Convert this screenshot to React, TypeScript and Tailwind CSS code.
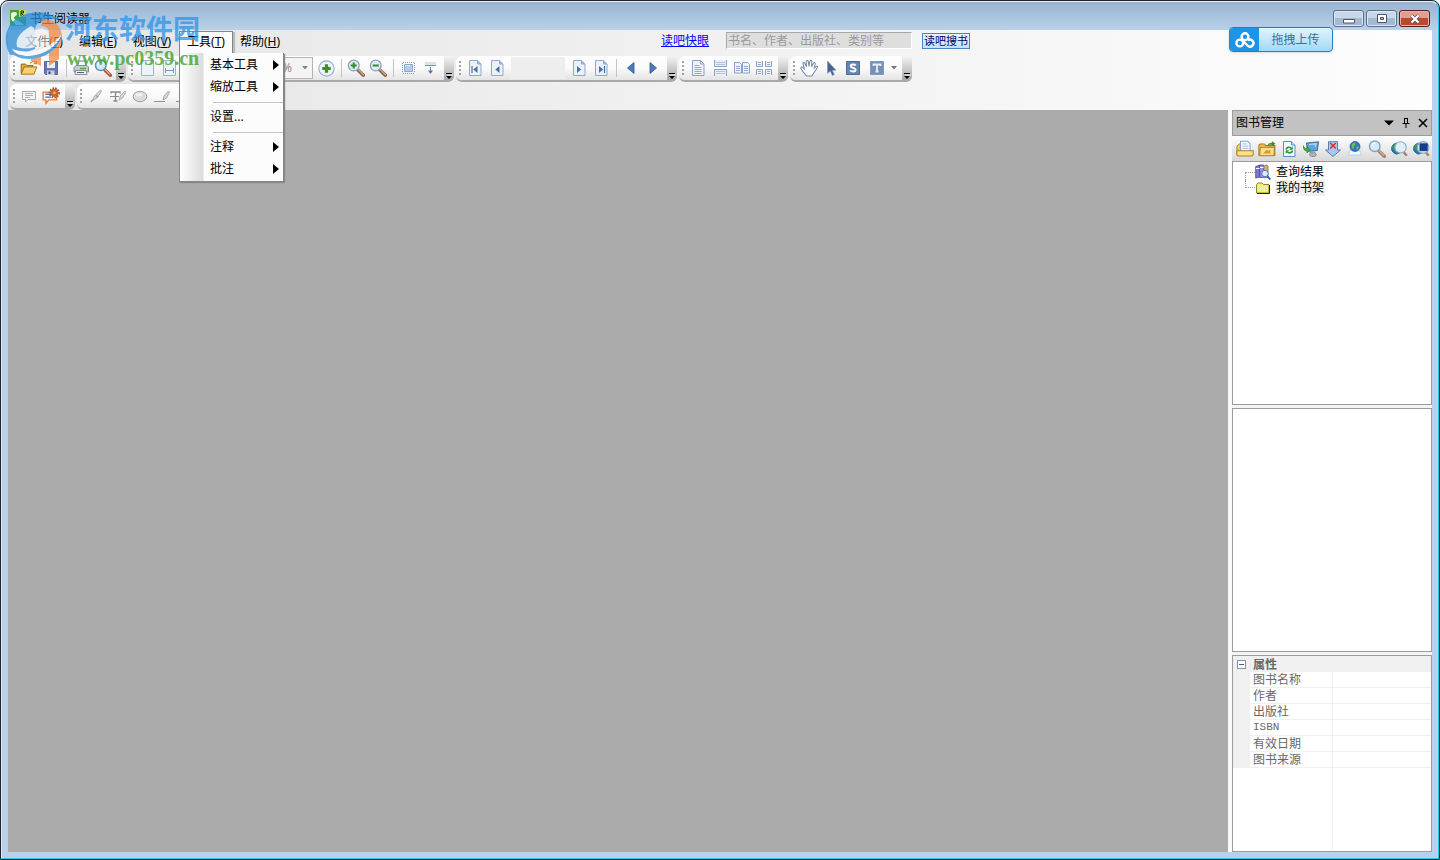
import React from 'react';

type Kids = { children?: React.ReactNode };

function Svg({ children, size = 'h-4 w-4' }: Kids & { size?: string }) {
  return (
    <svg viewBox="0 0 16 16" className={size + ' shrink-0'} fill="none" aria-hidden="true">
      {children}
    </svg>
  );
}

const steel = '#7d95b8';

/* ---------- toolbar icons ---------- */
const FolderOpen = () => (
  <Svg size="h-[18px] w-[18px]">
    <path d="M1 13V4.500h4l1 1.200h5.500V7" fill="#e0a93c" stroke="#8a6420" strokeWidth=".8" />
    <path d="M1 13.500 3.800 7H15l-2.600 6.500z" fill="#f7cf6b" stroke="#9b6d1c" strokeWidth=".8" />
    <path d="M9 4c1-2 3.500-2.400 5-.8M14.600 1.500v2.700h-2.600" stroke="#c79531" strokeWidth="1.100" />
  </Svg>
);
const Save = () => (
  <Svg>
    <path d="M1.500 1.500h13v13h-12l-1-1z" fill="#6675aa" stroke="#5a689c" />
    <path d="M4 2h8v6H4z" fill="#e9edf7" />
    <path d="M4 10.500h7.500V15H4z" fill="#c9cfe0" />
    <path d="M5.500 11.500h2V14h-2z" fill="#39457a" />
  </Svg>
);
const Printer = () => (
  <Svg>
    <path d="M4.500 6 6 1h7.500L12 6" fill="#f4f8fd" stroke="#6f7f95" />
    <path d="M1 7.500 3 5.500h11L15.500 7v5H1z" fill="#c5cad1" stroke="#707984" strokeWidth=".8" />
    <path d="M2.500 10.500h10.500l1 4H2z" fill="#eceff2" stroke="#707984" strokeWidth=".8" />
    <path d="M7 8.500h6" stroke="#58a84a" strokeWidth="1.300" />
    <path d="M4 12.500h7" stroke="#555e68" />
  </Svg>
);
function Lens({ mark }: { mark?: 'plus' | 'minus' }) {
  return (
    <Svg size="h-[18px] w-[18px]">
      <path d="m9.500 9.500 5 5" stroke="#8d624a" strokeWidth="3" strokeLinecap="round" />
      <path d="m9.800 9.200 4.800 4.800" stroke="#d0a48c" strokeWidth="1.200" strokeLinecap="round" />
      <circle cx="6" cy="5.800" r="4.800" fill="#dcecf8" stroke="#8a9db5" strokeWidth="1.100" />
      {mark && <path d="M3.300 5.800h5.400" stroke="#3c8a2c" strokeWidth="1.900" />}
      {mark === 'plus' && <path d="M6 3.100v5.400" stroke="#3c8a2c" strokeWidth="1.900" />}
    </Svg>
  );
}
function Search({ pale = false }: { pale?: boolean }) {
  return (
    <Svg size="h-[18px] w-[18px]">
      <path d="m9.500 9.500 5 5" stroke={pale ? '#a9826c' : '#b0573b'} strokeWidth="3" strokeLinecap="round" />
      <path d="m9.800 9.300 4.400 4.400" stroke="#e5b09a" strokeWidth="1" />
      <circle cx="6" cy="5.500" r="4.700" fill="#d2eafb" stroke={pale ? '#86a5c6' : '#5f8fc2'} strokeWidth="1.300" />
      <path d="M3.500 5c.3-1.500 1.500-2.200 2.800-2.200" stroke="#fff" strokeWidth="1.200" />
    </Svg>
  );
}
const PageBlank = () => (
  <Svg>
    <path d="M2.500.5h12v15h-12z" fill="#edf3fb" stroke="#9fb2cf" />
  </Svg>
);
const PageWidth = () => (
  <Svg>
    <path d="M2.500.5h12v15h-12z" fill="#edf3fb" stroke="#9fb2cf" />
    <path d="M4.500 8v5M12.500 8v5M5 10.500h7" stroke={steel} />
  </Svg>
);
const PlusCircle = () => (
  <Svg size="h-[17px] w-[17px]">
    <circle cx="8" cy="8" r="7.200" fill="#edf3fa" stroke="#94acd0" />
    <path d="M8 4v8M4 8h8" stroke="#3f8c2a" strokeWidth="3" />
  </Svg>
);
const FitScreen = () => (
  <Svg>
    <path d="M2.500 3v10M14.500 3v10M3 2.500h11M3 13.500h11" stroke={steel} strokeDasharray="1 1" />
    <path d="M4.500 4.500h8v7h-8z" fill="#b9cae5" stroke="#90a6c9" />
    <path d="M5 5.500h5" stroke="#dfe8f5" />
  </Svg>
);
const ScrollDown = () => (
  <Svg>
    <path d="M3 2h11v3H3z" fill="#d8e2f1" />
    <path d="M3 5.500h11" stroke={steel} />
    <path d="M8.500 7v4" stroke="#6b85ad" />
    <path d="M6 10.500h5L8.500 14z" fill="#5b76a4" />
  </Svg>
);
function PageNav({ kind }: { kind: 'first' | 'prev' | 'next' | 'last' }) {
  const left = kind === 'first' || kind === 'prev';
  return (
    <Svg>
      <path d="M2.500.5h8l3.500 3.500v11.500H2.500z" fill="#eaf1fa" stroke="#91a7c8" />
      <path d="M10.500.5V4H14" fill="#aabdd8" stroke="#91a7c8" />
      <path d={left ? 'M10.500 6v7L6.300 9.500z' : 'M6 6v7l4.200-3.500z'} fill="#4770a6" />
      {kind === 'first' && <path d="M5 6v7" stroke="#4770a6" strokeWidth="1.200" />}
      {kind === 'last' && <path d="M11.500 6v7" stroke="#4770a6" strokeWidth="1.200" />}
    </Svg>
  );
}
const TriLeft = () => (
  <Svg>
    <path d="M11 2.500v11L4.500 8z" fill="#4d7bb8" stroke="#2d5592" strokeWidth=".8" />
  </Svg>
);
const TriRight = () => (
  <Svg>
    <path d="M5 2.500v11L11.500 8z" fill="#4d7bb8" stroke="#2d5592" strokeWidth=".8" />
  </Svg>
);
const SinglePage = () => (
  <Svg>
    <path d="M2.500.5h8l3.500 3.500v11.500H2.500z" fill="#edf3fb" stroke="#8ba1c2" />
    <path d="M10.500.5V4H14" stroke="#8ba1c2" />
    <path d="M4.500 5.500h5M4.500 7.500h7M4.500 9.500h7M4.500 11.500h7M4.500 13.500h7" stroke="#93a9c9" />
  </Svg>
);
const Continuous = () => (
  <Svg>
    <path d="M2.500 0v6.500h12V0M2.500 16V9.500h12V16" fill="#e6eef9" stroke="#8ba1c2" />
    <path d="M4 2.500h9M4 4.500h9M4 11.500h9M4 13.500h9" stroke="#b3c3db" />
  </Svg>
);
const Facing = () => (
  <Svg>
    <path d="M.5 2.500h5L7.500 4.500v8.500h-7zM8.500 2.500h5l2 2v8.500h-7z" fill="#edf3fb" stroke="#8ba1c2" />
    <path d="M2 6.500h4M2 8.500h4M2 10.500h4M10 6.500h4M10 8.500h4M10 10.500h4" stroke="#93a9c9" />
  </Svg>
);
const ContinuousFacing = () => (
  <Svg>
    <path d="M.5 1v5.500h6V1M9.500 1v5.500h6V1M.5 15V9.500h6V15M9.500 15V9.500h6V15" fill="#edf3fb" stroke="#8ba1c2" />
    <path d="M2 2.500h3M2 4.500h3M11 2.500h3M11 4.500h3M2 11.500h3M2 13.500h3M11 11.500h3M11 13.500h3" stroke="#93a9c9" />
  </Svg>
);
const Hand = () => (
  <Svg size="h-[18px] w-[18px]">
    <path
      d="M6 15.200 2.500 11 .8 8.300c-.3-1 .9-1.500 1.600-.8L4 9 2.600 4.200c-.2-1.100 1.100-1.500 1.600-.5L5.800 7 5.500 2.200c0-1.200 1.600-1.300 1.800-.1L8 6.500l.8-4.600c.3-1.100 1.800-.9 1.700.3L10.300 7l1.700-3.300c.5-1 1.800-.5 1.500.6l-.9 3.700 1.500-1.300c.8-.6 1.700.1 1.200 1L12.500 12l-2 3.200z"
      fill="#fff"
      stroke="#7388aa"
      strokeWidth=".9"
    />
  </Svg>
);
const Arrow = () => (
  <Svg>
    <path d="M4.500 1v12.500l2.800-2.600 2 4.600 2-1-2-4.300h3.700z" fill="#48648e" stroke="#7d95b8" strokeWidth=".6" />
  </Svg>
);
const SnapS = () => (
  <Svg>
    <path d="M1.500 1.500h13v13h-13z" fill="#6785b2" stroke="#4f6c99" />
    <path d="M10.700 5.500C9.500 4 5.600 4 5.700 6.200c.1 2 4.900 1.200 4.900 3.500 0 2.300-4 2.200-5.400.6" stroke="#fff" strokeWidth="1.900" />
  </Svg>
);
const TextT = () => (
  <Svg>
    <path d="M1.500 1.500h13v13h-13z" fill="#7690ba" stroke="#8299bf" />
    <path d="M4.500 6V4.500h7V6M8 5v6.500M6.500 11.500h3" stroke="#e8eef7" strokeWidth="1.800" />
  </Svg>
);
const NoteGray = () => (
  <Svg>
    <path d="M1.500 3.500h13v8H7L4.500 14v-2.500h-3z" fill="#f5f5f5" stroke="#a9a9a9" />
    <path d="M4 5.500h8M4 7.500h8M4 9.500h5" stroke="#b0b0b0" />
  </Svg>
);
const NoteOrange = () => (
  <Svg size="h-[18px] w-[18px]">
    <path d="M1 4.500h12v7H6L3.500 14.500v-3H1z" fill="#fff" stroke="#ef7a22" strokeWidth="1.200" />
    <path d="M3 6.500h5M3 9h5" stroke="#3b6cc0" strokeWidth="1.300" />
    <circle cx="11" cy="5.200" r="3.600" fill="#c4692e" />
    <circle cx="11" cy="5.200" r="4.200" stroke="#a4501c" strokeWidth="1.500" strokeDasharray="1.400 1.100" />
    <circle cx="11" cy="5.200" r="1.200" fill="#f6b57b" />
  </Svg>
);
const Marker = () => (
  <Svg>
    <path d="m12.500 2-6 6-1.500 4 4-2 4.500-7z" fill="#d8d8d8" stroke="#a2a2a2" strokeWidth=".9" />
    <path d="M5 11.500 3 14M8 7.500l2 1.500" stroke="#999" strokeWidth="1.300" />
  </Svg>
);
const TextMarker = () => (
  <Svg>
    <path d="M1 5.500V4h9v1.500M5.500 4v8.500M3.500 13h4" stroke="#8a8a8a" strokeWidth="1.400" />
    <path d="M0 8.500h9" stroke="#8a8a8a" />
    <path d="m15 3-4.500 4.500L9 12l3.500-2L16 4z" fill="#d8d8d8" stroke="#a2a2a2" strokeWidth=".8" />
  </Svg>
);
const Oval = () => (
  <Svg>
    <ellipse cx="8" cy="8.500" rx="6.800" ry="5.200" fill="#dcdcdc" stroke="#a0a0a0" />
    <ellipse cx="7" cy="6.800" rx="3.500" ry="1.800" fill="#f0f0f0" />
  </Svg>
);
const Underline = () => (
  <Svg>
    <path d="M0 13.500h11" stroke="#8f8f8f" />
    <path d="m14.500 3-4.500 5-1 4 3.500-2 3-6z" fill="#d8d8d8" stroke="#a2a2a2" strokeWidth=".9" />
  </Svg>
);

/* ---------- library panel icons ---------- */
const LibOpen = () => (
  <Svg size="h-[18px] w-[18px]">
    <path d="M.8 13.500V5.500L3 3.500h2v10z" fill="#efc75a" stroke="#a9802a" strokeWidth=".8" />
    <path d="M4 10V1.200h6.500l2 2V10" fill="#f4f9ff" stroke="#7fa3cf" strokeWidth=".9" />
    <path d="M5.800 3.500h3.700M5.800 5.500h5M5.800 7.500h5" stroke="#9bbbe0" strokeWidth=".8" />
    <path d="M.8 13V9.500h14.500V13l-1 1.300H1.800z" fill="#fae08a" stroke="#a9802a" strokeWidth=".9" />
  </Svg>
);
const LibFolder = () => (
  <Svg size="h-[18px] w-[18px]">
    <path d="M.8 13.500V4.500L2 3.500h3.500L7 5h8v8.500z" fill="#f0c24e" stroke="#a27824" strokeWidth=".9" />
    <path d="M1.500 14 2 6.500h12.500l-.3 7.500z" fill="#fbe08c" stroke="#a27824" strokeWidth=".8" />
    <path d="M8.500 5c.5-2 2.500-2.700 4-2.500V1l3 2.300-3 2.300V4.300C11 4.200 9.500 4.200 8.500 5z" fill="#3d8c2d" />
    <path d="m4.500 12 3.500-3.500 1.300 1.300L11 8.500V12z" fill="#d9973a" />
  </Svg>
);
const LibRefresh = () => (
  <Svg>
    <path d="M2.500.5h8L14 4v11.500H2.500z" fill="#f5f9ff" stroke="#5f8ac5" />
    <path d="M10.500.5V4H14" fill="#cfe0f5" stroke="#5f8ac5" />
    <path d="M5 8.500c.5-2.300 3.500-3 5-1.200M11.500 9.500c-.5 2.500-3.500 3.200-5.200 1.300" stroke="#2f9437" strokeWidth="1.600" />
    <path d="M11.800 5.300v3.500H8.300zM4.700 12.800V9.300h3.500z" fill="#2f9437" />
  </Svg>
);
const LibMonitor = () => (
  <Svg>
    <path d="M3.500 2 15.500.8 14.300 9.500l-9.500.8z" fill="#58a6e2" stroke="#42607f" strokeWidth=".9" />
    <path d="m6 3.500 7-.7-.6 3" stroke="#b9ddf7" strokeWidth="1.200" />
    <path d="M7.500 11h4l2 3-2 1.500h-3L6.500 14z" fill="#a9b2bd" stroke="#6f7984" strokeWidth=".7" />
    <path d="M0 4.500c1 2.500 2.500 3 4 3V5.500L7 8.800 4 12v-2C1.500 10 0 8 0 4.500z" fill="#4ca93b" stroke="#2b7423" strokeWidth=".6" />
  </Svg>
);
const LibDownX = () => (
  <Svg>
    <path d="M3.500.7h9V9h3L8 15.500.5 9h3z" fill="#a9c8ee" stroke="#4b75b5" strokeWidth=".9" />
    <path d="m5.200 2 5.600 5.500M10.800 2 5.200 7.500" stroke="#d9302b" strokeWidth="1.600" />
  </Svg>
);
const Globe = ({ x = 8, y = 5.5, r = 5 }: { x?: number; y?: number; r?: number }) => (
  <>
    <circle cx={x} cy={y} r={r} fill="#3478c8" stroke="#1f4d8e" strokeWidth=".7" />
    <path
      d={`M${x - 3.5} ${y - 1}c1-2.800 3-3 4-2.300l-.5 2-1.500 1.200.5 2-1.500.5zM${x + 1} ${y + 1}l2.500-1.500.3 2-1.500 2z`}
      fill="#6cc14c"
    />
  </>
);
const LibGlobe = () => (
  <Svg>
    <path d="M3 9.500h10l1.500 4.500h-13z" fill="#eef8ff" stroke="#a7d3ee" strokeWidth=".9" />
    <Globe />
  </Svg>
);
const LibGlobeSearch = () => (
  <Svg size="h-[17px] w-[17px]">
    <circle cx="5.500" cy="8" r="5" fill="#3f9a4a" stroke="#1f5d8e" strokeWidth=".7" />
    <path d="M1 8c1 3 3 4.500 5 5" stroke="#2d6cc0" strokeWidth="1.800" />
    <path d="m12 11.500 2.800 3.300" stroke="#a9826c" strokeWidth="2.400" />
    <circle cx="9" cy="7" r="5.300" fill="#dff0fb" stroke="#8ba8c4" />
  </Svg>
);
const LibGlobeSave = () => (
  <Svg size="h-[17px] w-[17px]">
    <circle cx="5.500" cy="8" r="5" fill="#3f9a4a" stroke="#1f5d8e" strokeWidth=".7" />
    <path d="M1 8c1 3 3 4.500 5 5" stroke="#2d6cc0" strokeWidth="1.800" />
    <path d="m12 11.500 2.800 3.300" stroke="#a9826c" strokeWidth="2.400" />
    <circle cx="9.500" cy="7" r="5.500" fill="#cfe4f5" stroke="#8ba8c4" />
    <path d="M6.500 3.500h7V10h-7z" fill="#123f93" stroke="#0b2b6a" strokeWidth=".6" />
  </Svg>
);
const Books = () => (
  <Svg>
    <path d="M.7 2.500 4.700 1v12l-4 1z" fill="#7b77cf" stroke="#474296" strokeWidth=".8" />
    <path d="M4.700 1h4v12.500h-4z" fill="#9a8fe0" stroke="#474296" strokeWidth=".8" />
    <path d="M8.800 2.500 11.500.8l1.500 1.500v11l-4 .5z" fill="#d4b073" stroke="#7d6238" strokeWidth=".8" />
    <path d="M1 4.500h3.500M5 3.500h3.500" stroke="#fff" />
    <path d="m12 12 3.500 3.500" stroke="#2e62b4" strokeWidth="1.800" />
    <circle cx="10" cy="9.500" r="3.200" fill="#d8eefc" stroke="#4c7fc0" />
  </Svg>
);
const YellowFolder = () => (
  <Svg>
    <path d="M1.500 13V4.500L3 3h4l1.500 1.500h5.500V13z" fill="#fff23a" stroke="#8f8a28" />
    <path d="M14.500 5v8.500H2" stroke="#222" />
    <path d="M3 6.500h10M3 8.500h10M3 10.500h10" stroke="#fffcb5" strokeDasharray="1 1" />
  </Svg>
);

/* ---------- building blocks ---------- */
function Tool({ label, children }: Kids & { label: string }) {
  return (
    <button type="button" aria-label={label} className="flex h-6 w-[22px] shrink-0 items-center justify-center">
      {children}
    </button>
  );
}
const Divider = () => (
  <span className="flex w-2 shrink-0 justify-center">
    <span className="h-[18px] w-px bg-[#c4c4c4]" />
  </span>
);
function Strip({ children }: Kids) {
  return (
    <div className="flex h-[26px] shrink-0 items-center rounded-md border-b-2 border-[#a9a9a9] bg-linear-to-b from-white via-[#fafafa] to-[#e4e4e4]">
      <span className="flex w-2 shrink-0 flex-col items-center gap-0.5">
        <i className="size-0.5 bg-[#a3a3a3]" />
        <i className="size-0.5 bg-[#a3a3a3]" />
        <i className="size-0.5 bg-[#a3a3a3]" />
        <i className="size-0.5 bg-[#a3a3a3]" />
      </span>
      {children}
      <button
        type="button"
        aria-label="工具栏选项"
        className="ml-auto flex h-6 w-2.5 shrink-0 items-end justify-center rounded-r bg-linear-to-b from-[#f4f4f4] to-[#a8a8a8]"
      >
        <svg viewBox="0 0 8 8" className="size-2" aria-hidden="true">
          <path d="M1 1h6v1H1zM1 4h6L4 7z" fill="#000" />
          <path d="M2 3h6" stroke="#fff" strokeWidth=".8" />
        </svg>
      </button>
    </div>
  );
}

const menus: [string, string][] = [
  ['文件', 'F'],
  ['编辑', 'E'],
  ['视图', 'V'],
  ['工具', 'T'],
  ['帮助', 'H'],
];

const toolMenu: { text: string; sub: boolean; rule?: boolean }[] = [
  { text: '基本工具', sub: true },
  { text: '缩放工具', sub: true },
  { text: '设置...', sub: false, rule: true },
  { text: '注释', sub: true, rule: true },
  { text: '批注', sub: true },
];

function ToolMenu() {
  return (
    <ul
      role="menu"
      className="absolute top-full left-0 z-20 w-[105px] border border-t-0 border-[#868686] bg-linear-to-r from-white from-0% via-[#dcdcdc] via-[23px] to-[#fcfcfc] to-[24px] py-px shadow-[1px_1px_1px_#888]"
    >
      {toolMenu.map((m) => (
        <li key={m.text} role="none">
          {m.rule && <div className="mt-1 mb-[3px] ml-[33px] h-px bg-[#c3c3c3]" role="separator" />}
          <button
            type="button"
            role="menuitem"
            className="flex h-[22px] w-full items-center justify-between pr-1 pl-[30px] text-left"
          >
            {m.text}
            {m.sub && (
              <svg viewBox="0 0 6 10" className="h-2.5 w-1.5" aria-hidden="true">
                <path d="M0 0v10l6-5z" fill="#000" />
              </svg>
            )}
          </button>
        </li>
      ))}
    </ul>
  );
}

function TitleBar() {
  const glass =
    'flex h-[17px] w-[31px] items-center justify-center rounded-[3px] border border-[#5b6f8a] bg-linear-to-b from-[#c9d8e8] from-50% to-[#a3bad2] to-50% shadow-[inset_0_0_0_1px_#dbe7f3]';
  return (
    <header className="flex h-7 shrink-0 items-start pt-2 pl-2">
      <svg viewBox="0 0 16 16" className="size-4" aria-hidden="true">
        <path d="M0 0h16v16H0z" fill="#3fa62b" />
        <path d="M9 0h7v7H9z" fill="#c6ea34" />
        <path d="M11 6V1h2.500v2H11l3 3" stroke="#0c2d08" fill="none" />
        <path d="M1 3c4-2 6-1 6 1s-3 2-3 4 4 2 10 7H6C4 12 1 11 1 8z" fill="#e9f9e4" />
      </svg>
      <h1 className="ml-1 text-xs leading-[18px]">书生阅读器</h1>
      <div className="mr-2 ml-auto flex gap-0.5">
        <button type="button" aria-label="最小化" className={glass}>
          <svg viewBox="0 0 12 10" className="h-2.5 w-3" aria-hidden="true">
            <path d="M.5 5.500h11v3.500H.5z" fill="#fff" stroke="#4c5566" />
          </svg>
        </button>
        <button type="button" aria-label="最大化" className={glass}>
          <svg viewBox="0 0 12 10" className="h-2.5 w-3" aria-hidden="true">
            <path d="M1.500.5h9v8h-9z" fill="#fff" stroke="#4c5566" />
            <path d="M4.500 3.500h3v2h-3z" fill="#a3bad2" stroke="#4c5566" />
          </svg>
        </button>
        <button
          type="button"
          aria-label="关闭"
          className="flex h-[17px] w-[31px] items-center justify-center rounded-[3px] border border-[#571f26] bg-linear-to-b from-[#e0a091] from-50% to-[#bd4830] to-50% shadow-[inset_0_0_0_1px_#e9b4a6]"
        >
          <svg viewBox="0 0 12 10" className="h-2.5 w-3" aria-hidden="true">
            <path d="m2.500 1.500 7 7m0-7-7 7" stroke="#535666" strokeWidth="3.800" />
            <path d="m2.500 1.500 7 7m0-7-7 7" stroke="#fff" strokeWidth="2.200" />
          </svg>
        </button>
      </div>
    </header>
  );
}

function MenuBar() {
  return (
    <nav className="flex h-[25px] shrink-0 items-start pl-[9px]">
      {menus.map(([name, key]) => {
        const open = key === 'T';
        return (
          <div key={key} className="relative">
            <button
              type="button"
              className={
                open
                  ? 'mt-px h-[22px] w-[54px] border border-b-0 border-[#868686] bg-[#fcfcfc] pb-px shadow-[2px_1px_1px_#bbb]'
                  : 'mt-px h-[22px] w-[54px]'
              }
            >
              {name}(<u>{key}</u>)
            </button>
            {open && <ToolMenu />}
          </div>
        );
      })}
      <div className="ml-[374px] flex items-center pt-0.5 font-[Liberation_Sans,Noto_Sans_CJK_SC,sans-serif]">
        <a href="#kuaiyan" className="w-[65px] text-[#0000ff] underline">
          读吧快眼
        </a>
        <input
          aria-label="搜索图书"
          placeholder="书名、作者、出版社、类别等"
          className="h-[17px] w-[186px] border border-t-[#a8a8a8] border-r-white border-b-white border-l-[#a8a8a8] bg-[#dedede] px-px text-xs placeholder:text-[#9a9a9a]"
        />
        <button
          type="button"
          className="ml-2.5 h-4 w-12 border border-[#4a86b8] bg-linear-to-b from-[#eaf6fd] to-[#bfe2f7] text-[11px] leading-3 whitespace-nowrap text-[#00006a]"
        >
          读吧搜书
        </button>
      </div>
    </nav>
  );
}

function Toolbars() {
  return (
    <div className="flex shrink-0 flex-col gap-0.5 pt-px pl-0.5">
      <div className="flex gap-0.5">
        <Strip>
          <Tool label="打开"><FolderOpen /></Tool>
          <Tool label="保存"><Save /></Tool>
          <Divider />
          <Tool label="打印"><Printer /></Tool>
          <Tool label="查找"><Search /></Tool>
          <span className="w-0.5" />
        </Strip>
        <Strip>
          <Tool label="实际大小"><PageBlank /></Tool>
          <Tool label="适合宽度"><PageWidth /></Tool>
          <label className="mr-0.5 ml-[60px] flex h-[22px] w-[73px] items-center justify-end border border-[#b5b5b5] bg-[#f4f4f4] text-[#8c8c8c]">
            <select aria-label="缩放比例" className="w-full appearance-none pl-[41px] opacity-100" disabled>
              <option>%</option>
            </select>
            <svg viewBox="0 0 6 4" className="mr-1 h-1 w-1.5 shrink-0" aria-hidden="true">
              <path d="M0 0h6L3 3.500z" fill="#858585" />
            </svg>
          </label>
          <Tool label="增大"><PlusCircle /></Tool>
          <Divider />
          <Tool label="放大"><Lens mark="plus" /></Tool>
          <Tool label="缩小"><Lens mark="minus" /></Tool>
          <Divider />
          <Tool label="全屏"><FitScreen /></Tool>
          <Tool label="自动滚动"><ScrollDown /></Tool>
          <span className="w-[3px]" />
        </Strip>
        <Strip>
          <Tool label="第一页"><PageNav kind="first" /></Tool>
          <Tool label="上一页"><PageNav kind="prev" /></Tool>
          <input aria-label="页码" disabled className="mx-[3px] h-[22px] w-[54px] bg-[#eeeeee]" />
          <Tool label="下一页"><PageNav kind="next" /></Tool>
          <Tool label="最后一页"><PageNav kind="last" /></Tool>
          <Divider />
          <Tool label="后退"><TriLeft /></Tool>
          <Tool label="前进"><TriRight /></Tool>
          <span className="w-[3px]" />
        </Strip>
        <Strip>
          <Tool label="单页"><SinglePage /></Tool>
          <Tool label="连续"><Continuous /></Tool>
          <Tool label="对开"><Facing /></Tool>
          <Tool label="连续对开"><ContinuousFacing /></Tool>
          <span className="w-[3px]" />
        </Strip>
        <Strip>
          <Tool label="手形"><Hand /></Tool>
          <Tool label="选择"><Arrow /></Tool>
          <Tool label="快照"><SnapS /></Tool>
          <span className="w-0.5" />
          <Tool label="文本选择"><TextT /></Tool>
          <button type="button" aria-label="更多选择工具" className="flex w-3 justify-center">
            <svg viewBox="0 0 6 4" className="h-1 w-1.5" aria-hidden="true">
              <path d="M0 0h6L3 3.500z" fill="#777" />
            </svg>
          </button>
          <span className="w-0.5" />
        </Strip>
      </div>
      <div className="flex gap-0.5">
        <Strip>
          <Tool label="注释"><NoteGray /></Tool>
          <Tool label="注释设置"><NoteOrange /></Tool>
          <span className="w-[3px]" />
        </Strip>
        <Strip>
          <Tool label="荧光笔"><Marker /></Tool>
          <Tool label="文本荧光笔"><TextMarker /></Tool>
          <Tool label="椭圆"><Oval /></Tool>
          <Tool label="下划线"><Underline /></Tool>
          <Tool label="删除线"><Underline /></Tool>
          <span className="w-1" />
        </Strip>
      </div>
    </div>
  );
}

const fields = ['图书名称', '作者', '出版社', 'ISBN', '有效日期', '图书来源'];

function LibraryPanel() {
  return (
    <aside className="flex w-[200px] shrink-0 flex-col gap-[3px] bg-[#f4f4f4]">
      <div className="flex min-h-0 flex-[295] flex-col">
        <div className="flex h-[26px] shrink-0 items-center border border-[#9c9c9c] bg-[#c2c2c2] pl-[3px]">
          <h2 className="mr-auto">图书管理</h2>
          <button type="button" aria-label="菜单" className="flex w-[17px] justify-center">
            <svg viewBox="0 0 10 6" className="h-1.5 w-2.5" aria-hidden="true">
              <path d="M0 .5h10L5 5.500z" fill="#000" />
            </svg>
          </button>
          <button type="button" aria-label="固定" className="flex w-[17px] justify-center">
            <svg viewBox="0 0 8 10" className="h-2.5 w-2" fill="none" stroke="#000" aria-hidden="true">
              <path d="M2 .5h4M2.500 0v5M5.500 0v5M.5 5.500h7M4 6v4" />
            </svg>
          </button>
          <button type="button" aria-label="关闭面板" className="flex w-[17px] justify-center">
            <svg viewBox="0 0 10 10" className="size-2.5" stroke="#000" strokeWidth="1.600" aria-hidden="true">
              <path d="m1 1 8 8M9 1 1 9" />
            </svg>
          </button>
        </div>
        <div className="flex h-[25px] shrink-0 items-center bg-linear-to-b from-white to-[#d8d8d8] pl-0.5">
          <Tool label="打开图书"><LibOpen /></Tool>
          <Tool label="导入"><LibFolder /></Tool>
          <Tool label="刷新"><LibRefresh /></Tool>
          <Tool label="同步"><LibMonitor /></Tool>
          <Tool label="停止下载"><LibDownX /></Tool>
          <Tool label="网络"><LibGlobe /></Tool>
          <Tool label="搜索"><Search pale /></Tool>
          <Tool label="网络搜索"><LibGlobeSearch /></Tool>
          <Tool label="保存搜索"><LibGlobeSave /></Tool>
        </div>
        <ul className="min-h-0 flex-1 border border-[#9c9c9c] bg-white pt-0.5 pl-3 leading-4">
          <li className="flex items-center">
            <span className="h-2 w-2.5 shrink-0 self-end border-t border-l border-dotted border-[#999]" />
            <Books />
            <span className="ml-1 px-px">查询结果</span>
          </li>
          <li className="flex items-center">
            <span className="mb-2 h-2 w-2.5 shrink-0 border-b border-l border-dotted border-[#999]" />
            <YellowFolder />
            <span className="ml-1 bg-[#f0f0f0] px-px">我的书架</span>
          </li>
        </ul>
      </div>
      <div className="min-h-0 flex-[242] border border-[#9c9c9c] bg-white" />
      <div className="flex min-h-0 flex-[195] flex-col border border-[#9c9c9c] bg-white text-[#686868]">
        <table className="w-full table-fixed border-separate border-spacing-0 leading-[15px]">
          <colgroup>
            <col className="w-[17px]" />
            <col className="w-[83px]" />
            <col />
          </colgroup>
          <thead>
            <tr className="h-4 bg-[#f0f0f0]">
              <th className="p-0">
                <button
                  type="button"
                  aria-label="折叠"
                  className="mx-auto mt-px flex size-[9px] items-center justify-center border border-[#919191] bg-white"
                >
                  <i className="h-px w-[5px] bg-[#3d5fb0]" />
                </button>
              </th>
              <th colSpan={2} className="p-0 pl-[3px] text-left font-bold">
                属性
              </th>
            </tr>
          </thead>
          <tbody>
            {fields.map((f) => (
              <tr key={f} className="h-4">
                <td className="bg-[#f0f0f0] p-0" />
                <th
                  scope="row"
                  className={
                    f === 'ISBN'
                      ? 'border-r border-b border-[#f0f0f0] p-0 pl-[3px] text-left font-[Liberation_Mono,monospace] text-[11px] font-normal'
                      : 'border-r border-b border-[#f0f0f0] p-0 pl-[3px] text-left font-normal'
                  }
                >
                  {f}
                </th>
                <td className="border-b border-[#f0f0f0] p-0" />
              </tr>
            ))}
          </tbody>
        </table>
        <div className="w-[100px] flex-1 border-r border-[#f0f0f0]" />
      </div>
    </aside>
  );
}

function Watermark() {
  return (
    <div className="pointer-events-none absolute top-2.5 left-1 z-30 flex gap-1">
      <svg viewBox="0 0 58 56" className="h-14 w-[58px] opacity-75" fill="none" aria-hidden="true">
        <path d="M26 42h10v13l-10-5z" fill="#f28a45" />
        <path d="M37 8c12 0 20 7 20 18 0 5-1 8-3 11v11l-10 7V22c0-5-3-7-8-7z" fill="#f28a45" />
        <path
          d="M5 44C-3 30 0 12 16 5c13-6 29-5 39 5-7-3-13-3-18 0-5 2-7 5-7 10v18C22 41 13 44 5 44z"
          fill="#2b8fdb"
        />
        <path d="M12 36c-2-8 3-15 14-21 3 1 4 3 4 6v15c-6 2-12 2-18 0z" fill="#fff" opacity=".85" />
        <path d="M30 20c2-4 12-4 13 2v12c-4 2-8 3-13 4z" fill="#fff" opacity=".7" />
        <path d="M5 39c18 7 40 1 52-16-2 14-16 25-33 25-9 0-16-3-19-9z" fill="#2b8fdb" />
        <path d="M7 38c17 6 37 1 50-15-5 13-18 21-33 22-8 0-14-2-17-7z" fill="#fff" />
      </svg>
      <div className="whitespace-nowrap opacity-80">
        <p className="-ml-0.5 font-[Liberation_Serif,Noto_Sans_CJK_SC,serif] text-[27px] leading-[38px] font-bold text-[#3397ea]">河东软件园</p>
        <p className="font-[Liberation_Serif,serif] text-[20px] leading-[18px] font-bold text-[#3fa42f]">www.pc0359.cn</p>
      </div>
    </div>
  );
}

export default function App() {
  return (
    <div className="relative flex h-screen flex-col overflow-hidden rounded-t-lg border border-[#20252b] bg-[#b9d1ea] bg-linear-to-b from-[#98b3d0] from-0% to-[#b9d1ea] to-[29px] font-[Noto_Sans,Noto_Sans_CJK_SC,sans-serif] text-xs text-black select-none">
      <div className="flex min-h-0 flex-1 flex-col rounded-t-lg border border-t-[#e6f0fa] border-r-[#28c8e8] border-b-[#28c8e8] border-l-[#dcebf8]">
        <TitleBar />
        <div className="mx-1.5 mb-1.5 flex min-h-0 flex-1 flex-col bg-linear-to-r from-[#e5e5e5] to-[#fdfdfd]">
          <MenuBar />
          <Toolbars />
          <div className="flex min-h-0 flex-1 gap-1 bg-[#fafafa]">
            <main className="min-w-0 flex-1 bg-[#ababab]" />
            <LibraryPanel />
          </div>
        </div>
      </div>
      <button
        type="button"
        className="absolute top-[26px] right-[106px] z-20 flex h-[25px] w-[104px] items-stretch overflow-hidden rounded-sm border border-[#2181c4] bg-linear-to-b from-[#e2f4fe] to-[#a3d8f6] shadow-sm"
      >
        <span className="flex w-[29px] items-center justify-center bg-[#1f93e4]">
          <svg viewBox="0 0 20 16" className="h-4 w-5" fill="none" stroke="#fff" strokeWidth="2.400" aria-hidden="true">
            <circle cx="10" cy="4.700" r="3.400" />
            <circle cx="4.800" cy="11" r="3.400" />
            <path d="M8.500 9.500 12.500 13.500A3.400 3.400 0 1 0 13 8.400" />
          </svg>
        </span>
        <span className="flex flex-1 items-center justify-center pt-px text-[#3d6e98]">拖拽上传</span>
      </button>
      <Watermark />
    </div>
  );
}
